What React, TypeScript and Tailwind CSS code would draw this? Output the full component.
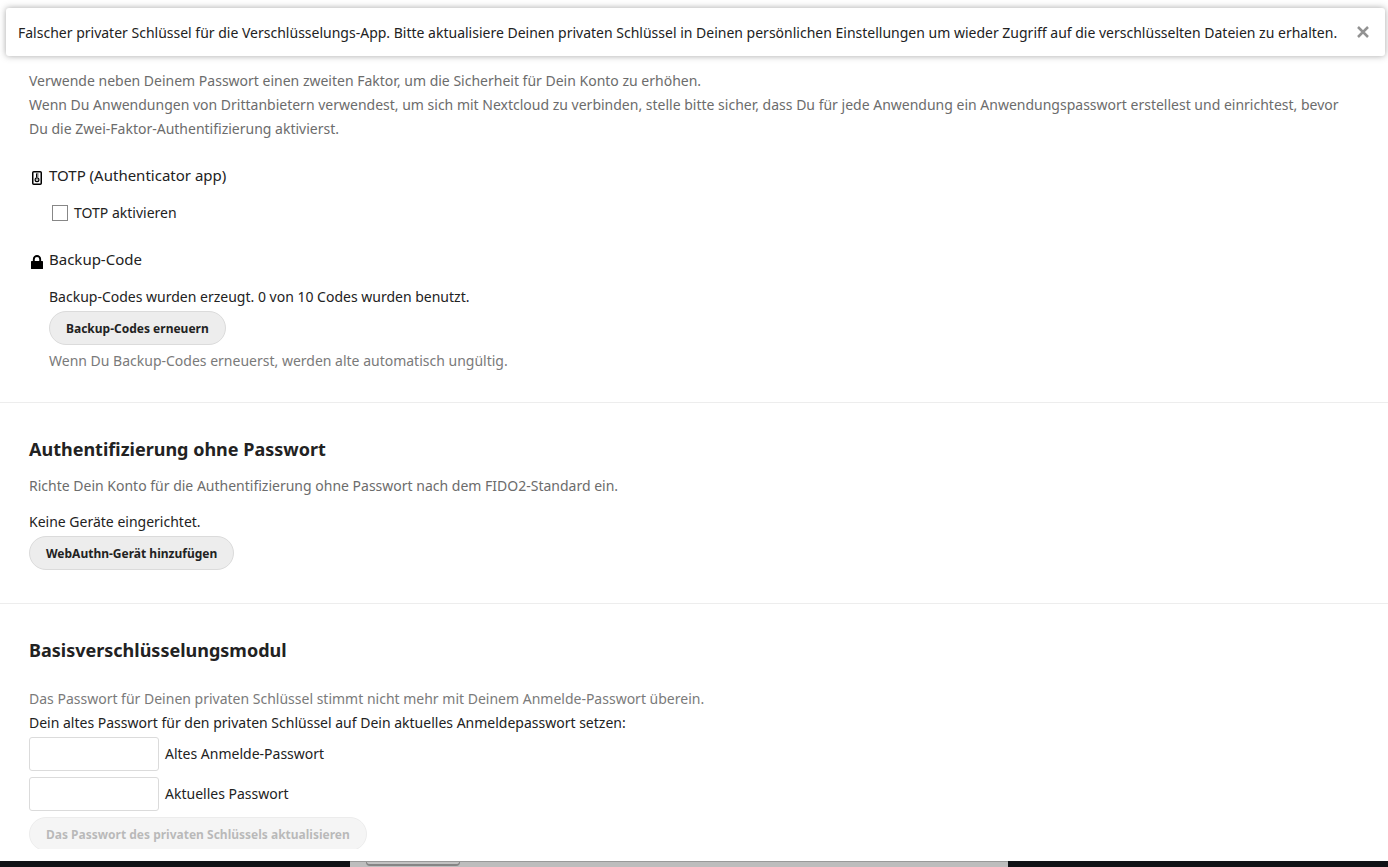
import type { ComponentProps, ReactNode } from 'react';

function PillButton(props: ComponentProps<'button'>) {
  return (
    <button
      type="button"
      className="block h-[34px] rounded-full border border-[#dbdbdb] bg-[#ededed] px-4 pt-0.5 text-xs font-bold whitespace-nowrap text-[#222] disabled:opacity-50 disabled:text-[#767676]"
      {...props}
    />
  );
}

function Provider({ icon, title, children }: { icon: ReactNode; title: string; children: ReactNode }) {
  return (
    <div className="mt-[22px]">
      <h3 className="flex h-6 items-center text-[15px]">
        <span className="flex w-5 pt-1.5 pl-0.5">{icon}</span>
        {title}
      </h3>
      <div className="mt-3.5 pl-5">{children}</div>
    </div>
  );
}

function DeviceIcon() {
  return (
    <svg width="12" height="14" viewBox="0 0 12 14" fill="none" stroke="#000" aria-hidden="true">
      <rect x="1.75" y="0.75" width="8.5" height="12.5" rx="1" strokeWidth="1.5" />
      <path d="M5.5 2.5v4M5.5 3h2M5.5 5h2" strokeWidth="1" />
      <circle cx="6" cy="8.8" r="1.9" strokeWidth="1.2" />
      <path d="M6 8.2v1.2" strokeWidth="0.8" />
    </svg>
  );
}

function LockIcon() {
  return (
    <svg width="12" height="14" viewBox="0 0 12 14" aria-hidden="true">
      <path d="M2.8 7V4.2a3.2 3.2 0 0 1 6.4 0V7" fill="none" stroke="#000" strokeWidth="1.9" />
      <rect y="6" width="12" height="8" rx="0.6" />
    </svg>
  );
}

function PasswordField({ id, label }: { id: string; label: string }) {
  return (
    <div className="flex items-center gap-1.5">
      <input id={id} type="password" className="h-[34px] w-[130px] rounded-[3px] border border-[#dbdbdb] bg-white px-1.5" />
      <label htmlFor={id}>{label}</label>
    </div>
  );
}

export default function App() {
  return (
    <div className="relative flex h-screen flex-col overflow-hidden bg-white font-['Noto_Sans',sans-serif] text-sm leading-6 text-[#222]">
      <div role="alert" className="absolute top-2 right-[3px] left-1.5 flex h-12 items-center justify-between rounded-[3px] bg-white pr-4 pl-3 shadow-[0_0_6px_rgba(77,77,77,0.5)]">
        <span className="pt-0.5">
          Falscher privater Schlüssel für die Verschlüsselungs-App. Bitte aktualisiere Deinen privaten Schlüssel in Deinen persönlichen Einstellungen um wieder Zugriff auf die verschlüsselten Dateien zu erhalten.
        </span>
        <button type="button" aria-label="Schließen">
          <svg width="12" height="12" viewBox="0 0 12 12" stroke="#929292" strokeWidth="2.5">
            <path d="M1 1l10 10M11 1L1 11" />
          </svg>
        </button>
      </div>

      <main className="min-h-0 flex-1 overflow-hidden pt-[69px]">
        <section className="border-b border-[#ededed] pr-9 pb-[29px] pl-[29px]">
          <p className="text-[#6c6c6c]">
            Verwende neben Deinem Passwort einen zweiten Faktor, um die Sicherheit für Dein Konto zu erhöhen.
            <br />
            Wenn Du Anwendungen von Drittanbietern verwendest, um sich mit Nextcloud zu verbinden, stelle bitte sicher, dass Du für jede Anwendung ein Anwendungspasswort erstellest und einrichtest, bevor Du die Zwei-Faktor-Authentifizierung aktivierst.
          </p>
          <Provider icon={<DeviceIcon />} title="TOTP (Authenticator app)">
            <div className="flex items-center gap-1.5 pl-[3px]">
              <input id="totp" type="checkbox" className="size-4 appearance-none border border-[#878787] bg-white checked:bg-[#0082c9]" />
              <label htmlFor="totp">TOTP aktivieren</label>
            </div>
          </Provider>
          <Provider icon={<LockIcon />} title="Backup-Code">
            <p className="mb-0.5">Backup-Codes wurden erzeugt. 0 von 10 Codes wurden benutzt.</p>
            <PillButton>Backup-Codes erneuern</PillButton>
            <p className="mt-1 text-[#7a7a7a]">Wenn Du Backup-Codes erneuerst, werden alte automatisch ungültig.</p>
          </Provider>
        </section>

        <section className="border-b border-[#ededed] px-[29px] pt-[34px] pb-[33px]">
          <h2 className="text-lg leading-6 font-bold">Authentifizierung ohne Passwort</h2>
          <p className="mt-[13px] text-[#6c6c6c]">Richte Dein Konto für die Authentifizierung ohne Passwort nach dem FIDO2-Standard ein.</p>
          <p className="mt-3 mb-0.5">Keine Geräte eingerichtet.</p>
          <PillButton>WebAuthn-Gerät hinzufügen</PillButton>
        </section>

        <section className="px-[29px] pt-[34px]">
          <h2 className="text-lg leading-6 font-bold">Basisverschlüsselungsmodul</h2>
          <p className="mt-[25px] text-[#7a7a7a]">Das Passwort für Deinen privaten Schlüssel stimmt nicht mehr mit Deinem Anmelde-Passwort überein.</p>
          <p>Dein altes Passwort für den privaten Schlüssel auf Dein aktuelles Anmeldepasswort setzen:</p>
          <div className="mt-0.5 flex flex-col items-start gap-1.5">
            <PasswordField id="old-password" label="Altes Anmelde-Passwort" />
            <PasswordField id="current-password" label="Aktuelles Passwort" />
            <PillButton disabled>Das Passwort des privaten Schlüssels aktualisieren</PillButton>
          </div>
        </section>
      </main>

      <div className="mt-3 flex h-1.5 shrink-0 bg-[#101216]">
        <div className="mr-[380px] ml-[350px] flex-1 border-t border-[#999] bg-[#bdbdbd] pl-4">
          <div className="h-1 w-[94px] rounded-b-sm border-x border-b-2 border-[#858585] bg-[#c2c2c2]" />
        </div>
      </div>
    </div>
  );
}
